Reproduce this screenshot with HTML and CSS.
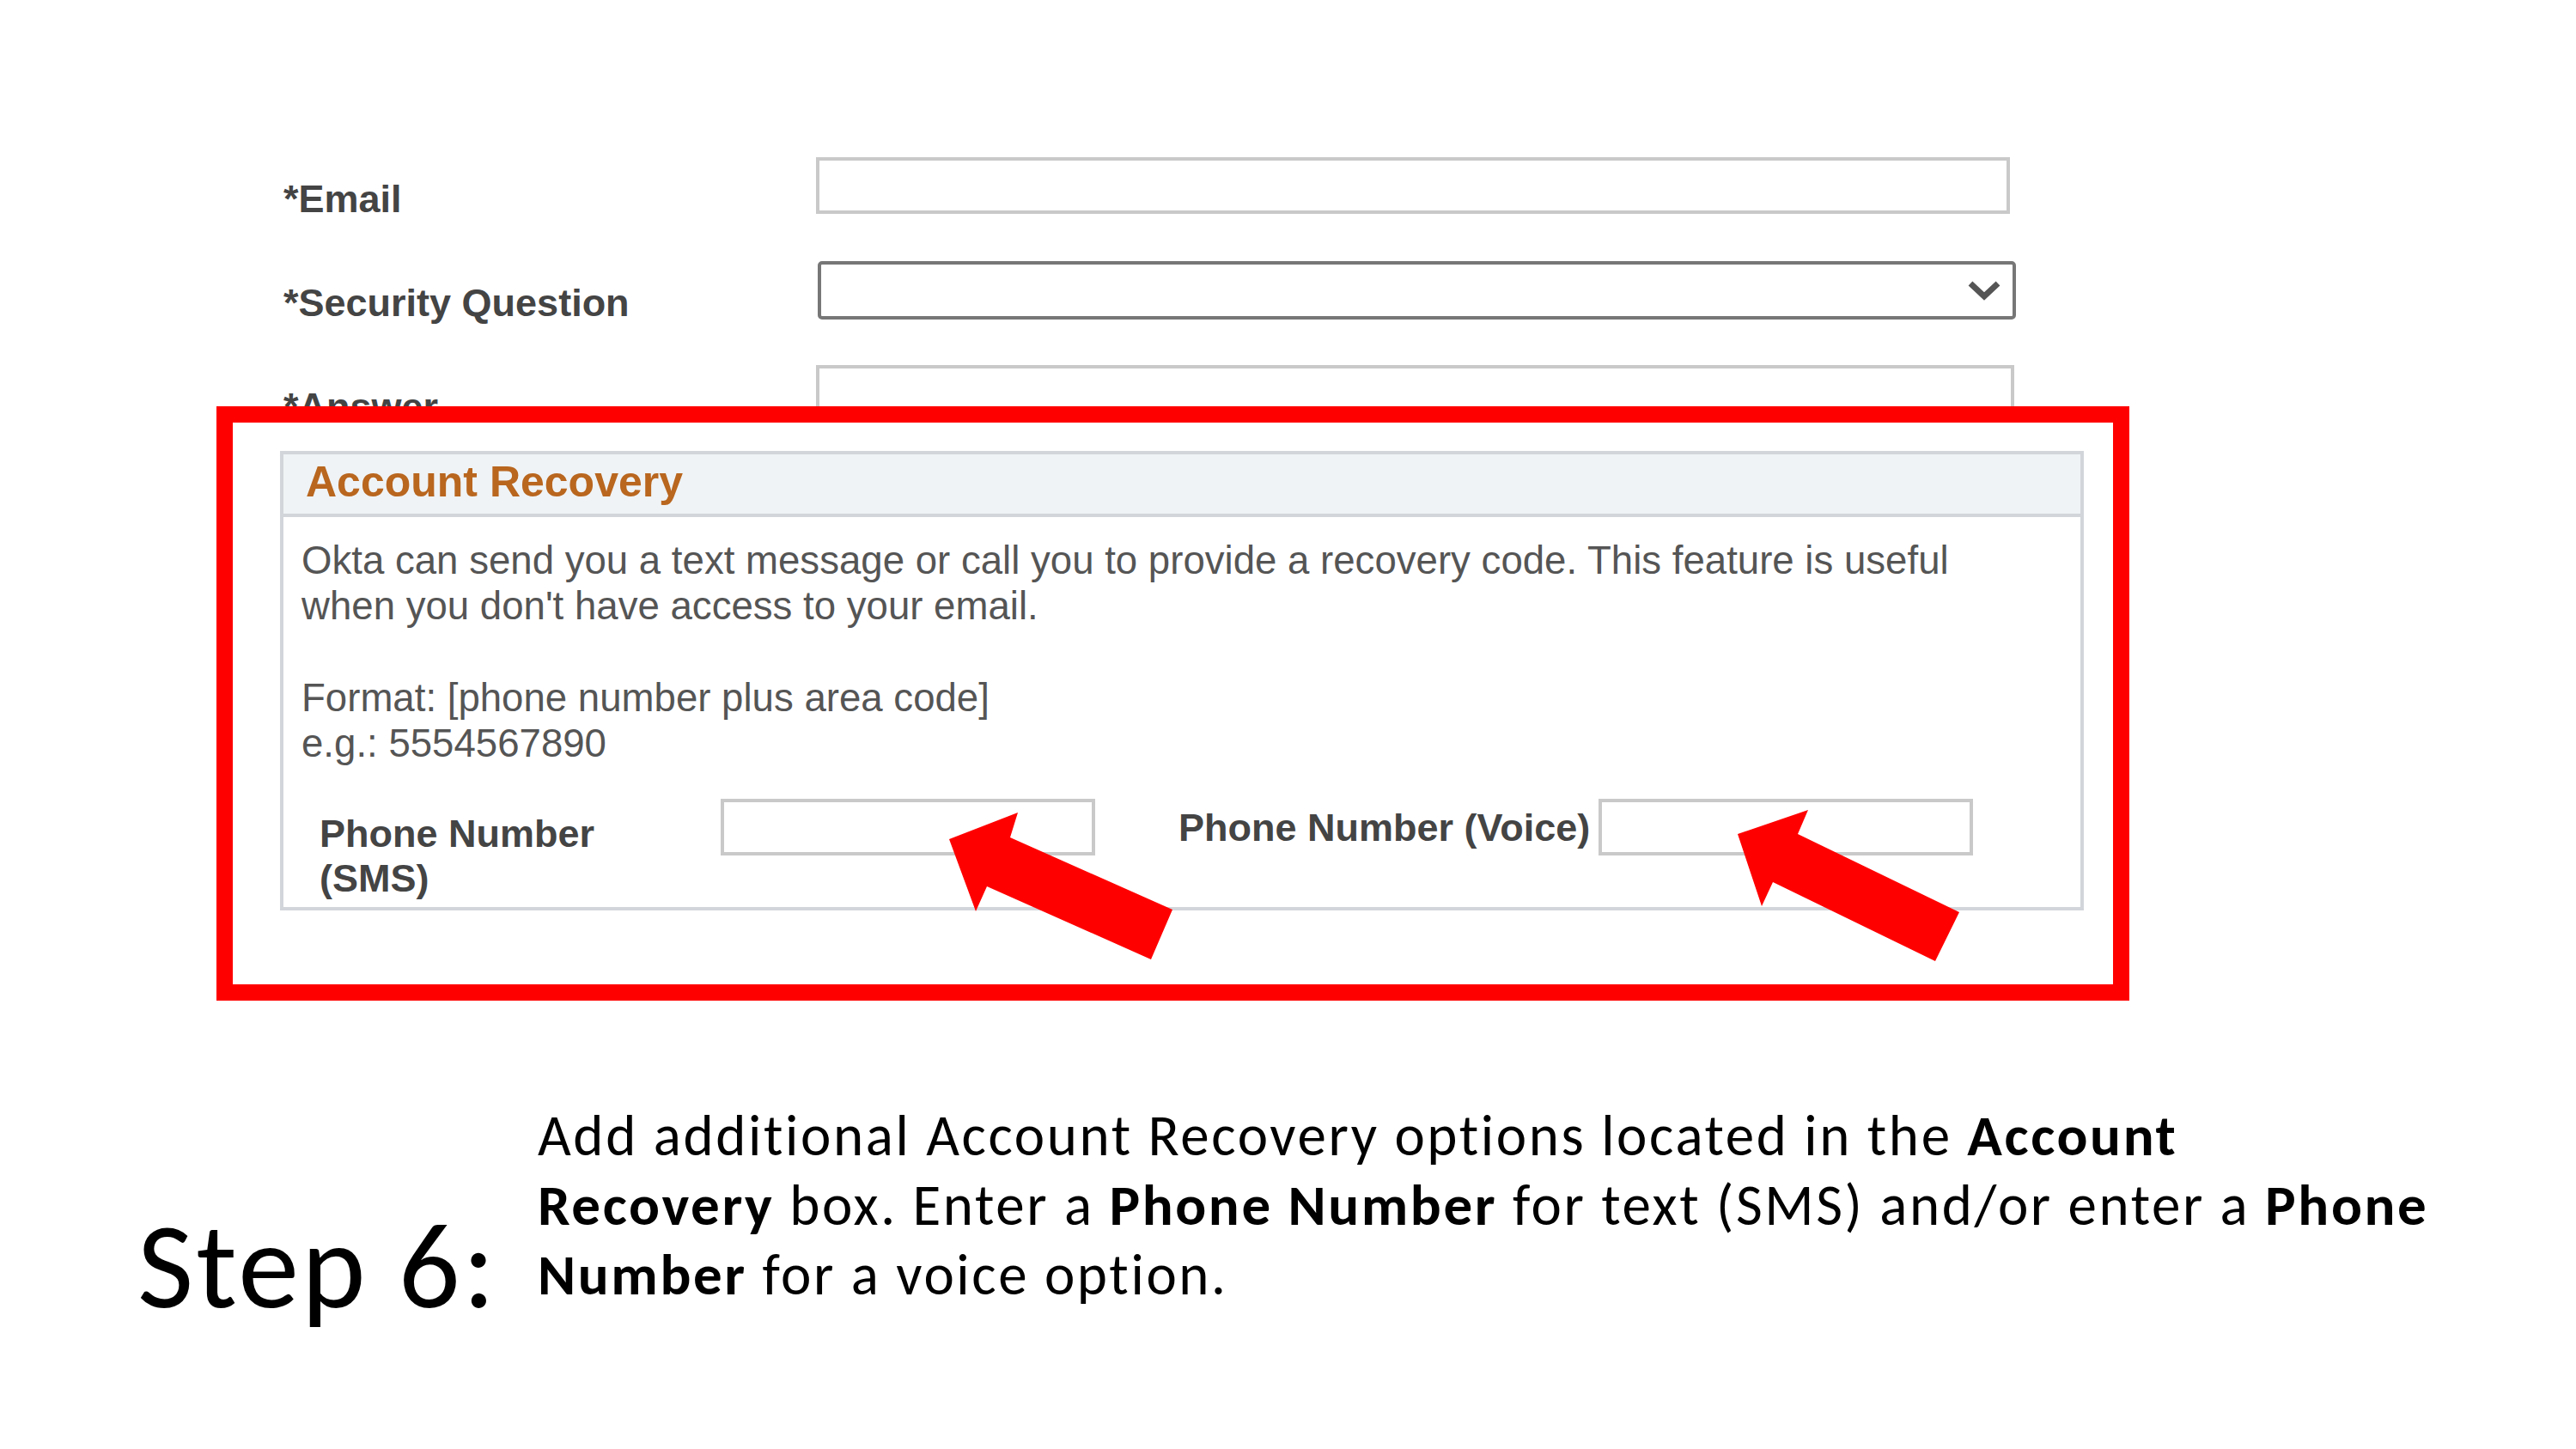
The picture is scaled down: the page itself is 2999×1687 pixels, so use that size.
FILE: index.html
```html
<!DOCTYPE html>
<html lang="en">
<head>
  <meta charset="UTF-8">
  <meta name="viewport" content="width=device-width, initial-scale=1.0">
  <title>Step 6 - Account Recovery</title>
  <link rel="stylesheet" href="styles.css">
</head>
<body>

  <div class="slide">

    <!-- Screenshot of the profile form -->
    <div class="shot">
      <div class="form-row">
        <div class="form-label">*Email</div>
        <div class="field field-email"></div>
      </div>

      <div class="form-row">
        <div class="form-label">*Security Question</div>
        <div class="field field-select">
          <svg width="40" height="26" viewBox="0 0 40 26">
            <polyline points="4,5 20,20 36,5" fill="none" stroke="#555" stroke-width="7"/>
          </svg>
        </div>
      </div>

      <div class="form-row last">
        <div class="form-label">*Answer</div>
        <div class="field field-answer"></div>
      </div>

      <!-- Account Recovery panel -->
      <div class="panel">
        <div class="panel-head">Account Recovery</div>
        <div class="panel-body">
          <p>Okta can send you a text message or call you to provide a recovery code. This feature is useful<br>when you don't have access to your email.</p>
          <p>Format: [phone number plus area code]<br>e.g.: 5554567890</p>

          <div class="phone-row">
            <div class="phone-label sms">Phone Number (SMS)</div>
            <div class="field field-phone"></div>
            <div class="phone-label voice">Phone Number (Voice)</div>
            <div class="field field-phone"></div>
          </div>
        </div>
      </div>
    </div>

    <!-- Annotations drawn over the screenshot -->
    <div class="callout"></div>
    <svg class="arrows" width="2999" height="1687" viewBox="0 0 2999 1687">
      <polygon points="1105,977 1185,946 1176,975 1365,1059 1340,1117 1149,1032 1136,1061" fill="#ff0000"/>
      <polygon points="2023,971 2105,943 2093,971 2281,1062 2253,1119 2064,1027 2051,1055" fill="#ff0000"/>
    </svg>

    <!-- Step caption -->
    <div class="step">
      <div class="step-num">Step 6:</div>
      <p class="step-text">
        Add additional Account Recovery options located in the <b>Account</b><br>
        <b>Recovery</b> box. Enter a <b>Phone Number</b> for text (SMS) and/or enter a <b>Phone</b><br>
        <b>Number</b> for a voice option.
      </p>
    </div>

  </div>

</body>
</html>
```

FILE: styles.css
```css
* {
  margin: 0;
  padding: 0;
  box-sizing: border-box;
}

body {
  background-color: #fff;
  font-family: "Liberation Sans", Arial, sans-serif;
}

.slide {
  position: relative;
  width: 2999px;
  height: 1687px;
  overflow: hidden;
}

/* Form screenshot */
.shot {
  width: 2100px;
  margin-left: 326px;
  padding-top: 183px;
}

.form-row {
  display: flex;
  height: 121px;
}

.form-row.last {
  height: 67px;
}

.form-label {
  width: 624px;
  padding-left: 4px;
  padding-top: 23px;
  font-size: 45px;
  font-weight: bold;
  line-height: 52px;
  color: #444;
}

.field {
  background-color: #fff;
  border: 4px solid #c9c9c9;
}

.field-email {
  width: 1390px;
  height: 66px;
}

.field-select {
  width: 1395px;
  height: 68px;
  margin-left: 2px;
  border-color: #777;
  border-radius: 5px;
  display: flex;
  justify-content: flex-end;
  align-items: center;
  padding-right: 13px;
}

.field-answer {
  width: 1395px;
  height: 67px;
}

/* Account Recovery panel */
.panel {
  margin-top: 33px;
  border: 4px solid #d2d6db;
}

.panel-head {
  background-color: #eff3f5;
  border-bottom: 4px solid #d2d6db;
  padding: 3px 26px 8px;
  font-size: 50px;
  font-weight: bold;
  line-height: 58px;
  color: #b9661f;
}

.panel-body {
  padding: 24px 21px 7px;
  font-size: 45.6px;
  line-height: 53.3px;
  color: #555;
}

.panel-body p {
  margin-bottom: 53.3px;
}

.panel-body p + p {
  margin-bottom: 0;
}

.phone-row {
  display: flex;
  align-items: flex-start;
  margin-top: 38px;
  padding-left: 21px;
  font-size: 45px;
}

.phone-label {
  font-weight: bold;
  line-height: 52px;
  color: #444;
}

.phone-label.sms {
  width: 420px;
  margin-right: 47px;
  margin-top: 15px;
}

.phone-label.voice {
  margin-left: 97px;
  margin-right: 10px;
  margin-top: 8px;
  white-space: nowrap;
}

.field-phone {
  width: 436px;
  height: 66px;
}

/* Red annotations */
.callout {
  position: absolute;
  left: 252px;
  top: 473px;
  width: 2227px;
  height: 692px;
  border: 19px solid #ff0000;
}

.arrows {
  position: absolute;
  left: 0;
  top: 0;
  pointer-events: none;
}

/* Step caption */
.step {
  display: flex;
  align-items: flex-end;
  margin-top: 222px;
  padding-left: 160px;
  font-family: Carlito, Calibri, Lato, sans-serif;
  color: #000;
}

.step-num {
  width: 466px;
  font-size: 142px;
  letter-spacing: 3px;
  line-height: 150px;
  margin-bottom: -24px;
}

.step-text {
  font-size: 67px;
  letter-spacing: 2.6px;
  line-height: 81px;
}

.step-text b {
  font-weight: bold;
}
```
